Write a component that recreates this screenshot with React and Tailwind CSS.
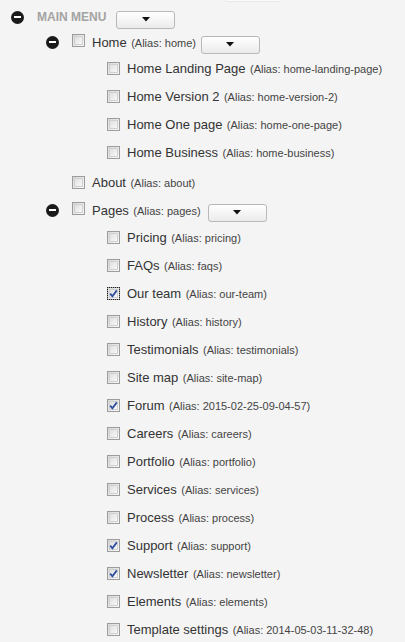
import React from "react";

function Minus() {
  return (
    <span className="inline-flex items-center justify-center w-[13px] h-[13px] rounded-full bg-[#1a1a1a] shrink-0">
      <span className="block w-[7px] h-[2px] bg-white" />
    </span>
  );
}

function Check({ checked, focus }) {
  return (
    <span className="relative inline-flex items-center justify-center w-[13px] h-[13px] shrink-0">
      <span className="absolute inset-0 border border-[#9c9c9c] bg-gradient-to-br from-[#d8d8d8] to-[#fafafa]" />
      <span className="absolute inset-[2px] border border-[#d0d0d0] bg-gradient-to-br from-[#e0e0e0] to-[#f8f8f8]" />
      {focus && <span className="absolute inset-0 border border-dotted border-[#222]" />}
      {checked && (
        <svg viewBox="0 0 13 13" className="relative w-[13px] h-[13px]">
          <path d="M3.2 6.6 L5.4 9.2 L9.8 3.4" fill="none" stroke="#2f4f9f" strokeWidth="1.8" />
        </svg>
      )}
    </span>
  );
}

function DropBtn() {
  return (
    <span className="inline-flex items-center justify-center w-[59px] h-[18px] rounded-[3px] border border-[#b8b8b8] bg-gradient-to-b from-white to-[#ebebeb] shrink-0">
      <svg viewBox="0 0 8 5" className="w-[8px] h-[5px]">
        <path d="M0 0 H8 L4 4.5 Z" fill="#111" />
      </svg>
    </span>
  );
}

function Label({ name, alias }) {
  return (
    <span className="whitespace-nowrap text-[#333]">
      <span className="text-[13px]">{name}</span>{" "}
      <span className="text-[11px] text-[#444]">(Alias: {alias})</span>
    </span>
  );
}

const homeChildren = [
  ["Home Landing Page", "home-landing-page"],
  ["Home Version 2", "home-version-2"],
  ["Home One page", "home-one-page"],
  ["Home Business", "home-business"],
];

const pageChildren = [
  ["Pricing", "pricing"],
  ["FAQs", "faqs"],
  ["Our team", "our-team", true, true],
  ["History", "history"],
  ["Testimonials", "testimonials"],
  ["Site map", "site-map"],
  ["Forum", "2015-02-25-09-04-57", true],
  ["Careers", "careers"],
  ["Portfolio", "portfolio"],
  ["Services", "services"],
  ["Process", "process"],
  ["Support", "support", true],
  ["Newsletter", "newsletter", true],
  ["Elements", "elements"],
  ["Template settings", "2014-05-03-11-32-48"],
];

function Child({ name, alias, checked, focus }) {
  return (
    <div className="h-[28px] flex items-center pl-[107px] gap-[7px]">
      <Check checked={checked} focus={focus} />
      <Label name={name} alias={alias} />
    </div>
  );
}

export default function App() {
  return (
    <div
      className="relative w-[405px] h-[642px] overflow-hidden bg-[#f4f4f4]"
      style={{ fontFamily: '"Liberation Sans", Arial, sans-serif' }}
    >
      <div className="absolute left-[224px] top-[-3px] w-[57px] h-[5px] rounded-[3px] bg-[#fbfbfb] border border-[#e8e8e8]" />
      <div className="flex flex-col pt-[4px]">
        <div className="h-[26px] flex items-center pl-[11px]">
          <Minus />
          <span className="ml-[13px] text-[12px] font-bold text-[#a3a3a3]">MAIN MENU</span>
          <span className="ml-[10px]">
            <DropBtn />
          </span>
        </div>
        <div className="h-[24px] flex items-center pl-[46px]">
          <Minus />
          <span className="ml-[13px]">
            <Check />
          </span>
          <span className="ml-[7px]">
            <Label name="Home" alias="home" />
          </span>
          <span className="ml-[5px]">
            <DropBtn />
          </span>
        </div>
        {homeChildren.map(([n, a]) => (
          <Child key={a} name={n} alias={a} />
        ))}
        <div className="h-[28px] mt-[2px] flex items-center pl-[72px] gap-[7px]">
          <Check />
          <Label name="About" alias="about" />
        </div>
        <div className="h-[26px] mt-[1px] flex items-center pl-[46px]">
          <Minus />
          <span className="ml-[13px]">
            <Check />
          </span>
          <span className="ml-[7px]">
            <Label name="Pages" alias="pages" />
          </span>
          <span className="ml-[7px]">
            <DropBtn />
          </span>
        </div>
        {pageChildren.map(([n, a, c, f]) => (
          <Child key={a} name={n} alias={a} checked={c} focus={f} />
        ))}
      </div>
    </div>
  );
}
